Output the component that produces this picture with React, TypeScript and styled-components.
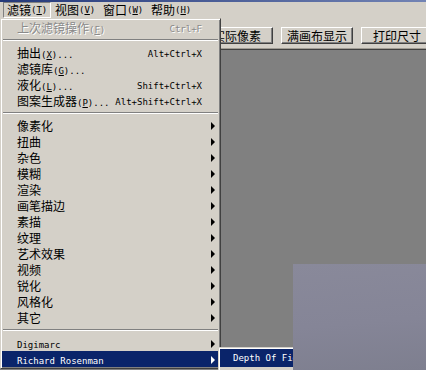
import React, { FC } from "react";
import styled, { createGlobalStyle } from "styled-components";

const GlobalStyle = createGlobalStyle`
  html, body {
    margin: 0;
    padding: 0;
    background: #808080;
  }
  body {
    font-family: "Noto Sans CJK SC", "Noto Sans", sans-serif;
  }
`;

const Screen = styled.div`
  position: relative;
  width: 426px;
  height: 370px;
  overflow: hidden;
  display: flex;
  flex-direction: column;
  background: #808080;
`;

const TitleStrip = styled.div`
  height: 2px;
  background: linear-gradient(90deg, #23387a, #7283b4);
`;

const MenuBar = styled.div`
  height: 16px;
  display: flex;
  align-items: stretch;
  padding-left: 3px;
  background: #d4d0c8;
`;

const MenuTitle = styled.div<{ $open?: boolean }>`
  box-sizing: border-box;
  flex: none;
  display: flex;
  align-items: center;
  width: 48px;
  padding: 0 3px;
  font-size: 12px;
  line-height: 14px;
  white-space: nowrap;
  color: #000;
  border: 1px solid transparent;
  ${(p) =>
    p.$open &&
    `
    border-color: #808080 #ffffff #ffffff #808080;
  `}
`;

const Latin = styled.span`
  font-family: "DejaVu Sans Mono", "Liberation Mono", monospace;
  font-size: 9px;
  white-space: nowrap;
`;

const Key = styled.span`
  text-decoration: underline;
`;

const Toolbar = styled.div`
  box-sizing: border-box;
  height: 32px;
  display: flex;
  align-items: flex-start;
  gap: 8px;
  padding: 9px 0 0 201px;
  background: #d4d0c8;
  border-bottom: 1px solid #404040;
  box-shadow: inset 0 -1px 0 #a09c94;
`;

const ToolButton = styled.div`
  box-sizing: border-box;
  flex: none;
  width: 72px;
  height: 17px;
  display: flex;
  align-items: center;
  justify-content: center;
  font-size: 12px;
  color: #000;
  background: #d4d0c8;
  border-style: solid;
  border-width: 1px;
  border-color: #ffffff #404040 #404040 #ffffff;
  box-shadow: inset -1px -1px 0 #808080;
`;

const Canvas = styled.div`
  flex: 1;
  background: #808080;
`;

const Dropdown = styled.div`
  position: absolute;
  top: 18px;
  left: 0;
  width: 221px;
  box-sizing: border-box;
  padding: 1px;
  background: #d4d0c8;
  border-style: solid;
  border-width: 1px;
  border-color: #d4d0c8 #404040 #404040 #d4d0c8;
  box-shadow: inset 1px 1px 0 #ffffff, inset -1px -1px 0 #808080;
`;

const Item = styled.div<{ $disabled?: boolean; $active?: boolean }>`
  display: grid;
  grid-template-columns: 1fr auto 17px;
  align-items: center;
  height: 16px;
  padding-left: 15px;
  font-size: 12px;
  line-height: 16px;
  white-space: nowrap;
  color: ${(p) => (p.$disabled ? "#8a8a8a" : p.$active ? "#ffffff" : "#000000")};
  background: ${(p) => (p.$active ? "#0a246a" : "transparent")};
  text-shadow: ${(p) => (p.$disabled ? "1px 1px 0 #ffffff" : "none")};
`;

const Shortcut = styled(Latin)`
  text-align: right;
`;

const ArrowCell = styled.span`
  display: flex;
  justify-content: flex-end;
  padding-right: 4px;
`;

const Arrow = styled.span<{ $light?: boolean }>`
  width: 0;
  height: 0;
  border-left: 4px solid ${(p) => (p.$light ? "#ffffff" : "#000000")};
  border-top: 4px solid transparent;
  border-bottom: 4px solid transparent;
`;

const Separator = styled.div`
  height: 0;
  margin: 3px 1px 4px;
  border-top: 1px solid #808080;
  border-bottom: 1px solid #ffffff;
`;

const SubMenu = styled.div`
  position: absolute;
  top: 347px;
  left: 218px;
  width: 140px;
  height: 30px;
  box-sizing: border-box;
  padding: 1px 0 0 1px;
  background: #d4d0c8;
  border-top: 1px solid #d4d0c8;
  border-left: 1px solid #d4d0c8;
  box-shadow: inset 1px 1px 0 #ffffff;
`;

const SubItem = styled.div`
  height: 18px;
  padding-left: 13px;
  display: flex;
  align-items: center;
  background: #0a246a;
  color: #ffffff;
`;

const Haze = styled.div`
  position: absolute;
  left: 293px;
  top: 264px;
  right: 0;
  bottom: 0;
  background: linear-gradient(175deg, #89899a 0%, #858597 55%, #7e7f8f 100%);
`;

type Entry =
  | { kind: "sep" }
  | {
      kind: "item";
      label: string;
      key?: string;
      dots?: boolean;
      shortcut?: string;
      sub?: boolean;
      disabled?: boolean;
      active?: boolean;
      latin?: boolean;
    };

const entries: Entry[] = [
  { kind: "item", label: "上次滤镜操作", key: "F", shortcut: "Ctrl+F", disabled: true },
  { kind: "sep" },
  { kind: "item", label: "抽出", key: "X", dots: true, shortcut: "Alt+Ctrl+X" },
  { kind: "item", label: "滤镜库", key: "G", dots: true },
  { kind: "item", label: "液化", key: "L", dots: true, shortcut: "Shift+Ctrl+X" },
  { kind: "item", label: "图案生成器", key: "P", dots: true, shortcut: "Alt+Shift+Ctrl+X" },
  { kind: "sep" },
  ...["像素化", "扭曲", "杂色", "模糊", "渲染", "画笔描边", "素描", "纹理", "艺术效果", "视频", "锐化", "风格化", "其它"].map(
    (label): Entry => ({ kind: "item", label, sub: true })
  ),
  { kind: "sep" },
  { kind: "item", label: "Digimarc", sub: true, latin: true },
  { kind: "item", label: "Richard Rosenman", sub: true, latin: true, active: true },
];

const MenuEntry: FC<{ entry: Entry }> = ({ entry }) => {
  if (entry.kind === "sep") {
    return <Separator />;
  }
  return (
    <Item $disabled={entry.disabled} $active={entry.active}>
      <span>
        {entry.latin ? <Latin>{entry.label}</Latin> : entry.label}
        {entry.key ? (
          <Latin>
            (<Key>{entry.key}</Key>){entry.dots ? "..." : ""}
          </Latin>
        ) : null}
      </span>
      <Shortcut>{entry.shortcut}</Shortcut>
      <ArrowCell>{entry.sub ? <Arrow $light={entry.active} /> : null}</ArrowCell>
    </Item>
  );
};

const titles = [
  { label: "滤镜", key: "T" },
  { label: "视图", key: "V" },
  { label: "窗口", key: "W" },
  { label: "帮助", key: "H" },
];

const App: FC = () => (
  <>
    <GlobalStyle />
    <Screen>
      <TitleStrip />
      <MenuBar>
        {titles.map((t, i) => (
          <MenuTitle key={t.key} $open={i === 0}>
            {t.label}
            <Latin>
              (<Key>{t.key}</Key>)
            </Latin>
          </MenuTitle>
        ))}
      </MenuBar>
      <Toolbar>
        <ToolButton>实际像素</ToolButton>
        <ToolButton>满画布显示</ToolButton>
        <ToolButton>打印尺寸</ToolButton>
      </Toolbar>
      <Canvas />
      <Dropdown>
        {entries.map((e, i) => (
          <MenuEntry key={i} entry={e} />
        ))}
      </Dropdown>
      <SubMenu>
        <SubItem>
          <Latin>Depth Of Field</Latin>
        </SubItem>
      </SubMenu>
      <Haze />
    </Screen>
  </>
);

export default App;
